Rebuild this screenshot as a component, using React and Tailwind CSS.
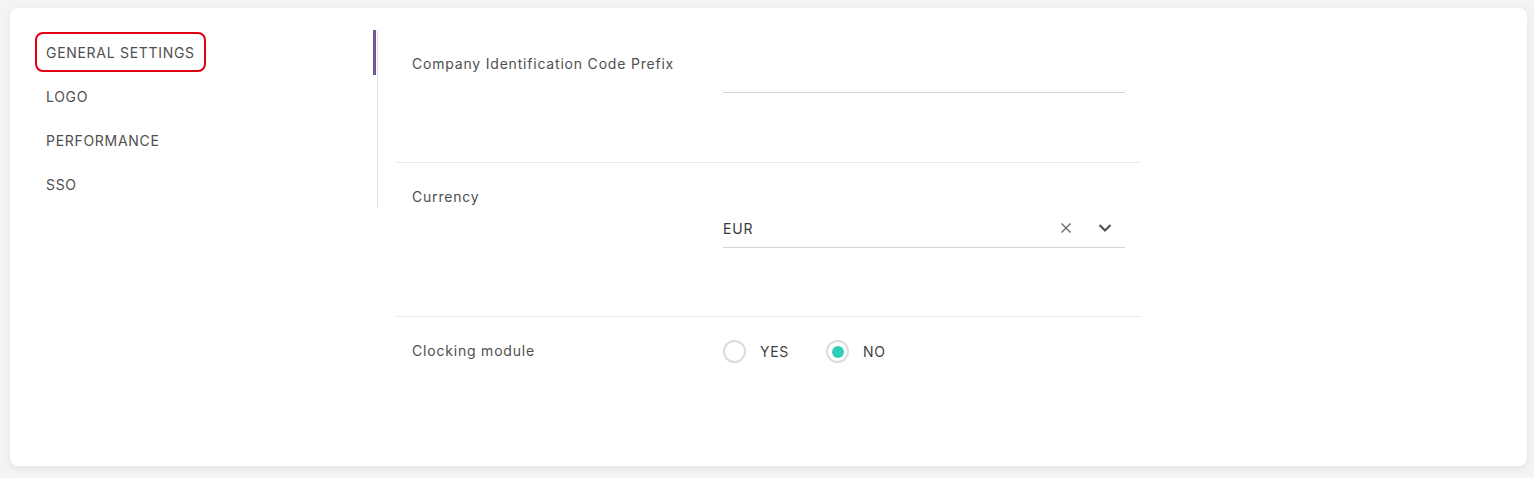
import React from "react";

const font = { fontFamily: "Inter, 'Open Sans', sans-serif" };

function NavItem({ label, active }) {
  return (
    <div
      className={
        "h-[40px] mb-[4px] flex items-center rounded-[8px] text-[14px] tracking-[0.7px] text-[#4f4f4f] w-fit px-[9px] border-2 " +
        (active ? "border-[#e3000f]" : "border-transparent")
      }
    >
      {label}
    </div>
  );
}

function Radio({ checked, label }) {
  return (
    <div className="flex items-center">
      <div className="w-[23px] h-[23px] rounded-full border-2 border-[#dcdcdc] flex items-center justify-center bg-white">
        {checked && <div className="w-[12px] h-[12px] rounded-full bg-[#2fcdb6]" />}
      </div>
      <span className="ml-[14px] text-[14px] tracking-[0.7px] text-[#3f3f3f]">{label}</span>
    </div>
  );
}

export default function App() {
  return (
    <div className="w-[1534px] h-[478px] bg-[#f4f4f4] pt-[8px] pl-[10px]" style={font}>
      <div className="w-[1517px] h-[458px] bg-white rounded-[8px] shadow-[0_2px_8px_rgba(0,0,0,0.08)] flex">
        {/* Nav */}
        <div className="w-[368px] pt-[22px] flex">
          <div className="relative w-[368px] h-[178px] border-r border-[#e0e0e0] pl-[25px] pt-[2px]">
            <div className="absolute right-[1px] top-0 w-[3px] h-[45px] bg-[#7a5394]" />
            <NavItem label="GENERAL SETTINGS" active />
            <NavItem label="LOGO" />
            <NavItem label="PERFORMANCE" />
            <NavItem label="SSO" />
          </div>
        </div>
        {/* Content */}
        <div className="pl-[18px] pt-[22px] text-[14px] text-[#4f4f4f]">
          <div className="w-[745px] h-[133px] border-b border-[#ebebeb] flex px-[16px]">
            <div className="w-[311px] pt-[24px] leading-[20px] tracking-[0.8px]">Company Identification Code Prefix</div>
            <div className="pt-[24px]">
              <div className="w-[402px] h-[39px] border-b border-[#d3d3d3]" />
            </div>
          </div>
          <div className="w-[745px] h-[154px] border-b border-[#ebebeb] flex px-[16px]">
            <div className="w-[311px] pt-[24px] leading-[20px] tracking-[0.8px]">Currency</div>
            <div className="pt-[46px]">
              <div className="w-[402px] h-[39px] border-b border-[#d3d3d3] flex items-center">
                <span className="flex-1 text-[#3a3a3a] tracking-[0.8px]">EUR</span>
                <svg width="12" height="12" viewBox="0 0 12 12" className="mr-[26px]">
                  <path d="M1.5 1.5 L10.5 10.5 M10.5 1.5 L1.5 10.5" stroke="#6b6b6b" strokeWidth="1.4" fill="none" />
                </svg>
                <svg width="14" height="10" viewBox="0 0 14 10" className="mr-[13px]">
                  <path d="M1.5 2 L7 7.5 L12.5 2" stroke="#4d5660" strokeWidth="2.2" fill="none" />
                </svg>
              </div>
            </div>
          </div>
          <div className="w-[745px] flex px-[16px]">
            <div className="w-[311px] pt-[24px] leading-[20px] tracking-[0.8px]">Clocking module</div>
            <div className="pt-[23px] flex items-center gap-[37px]">
              <Radio label="YES" />
              <Radio label="NO" checked />
            </div>
          </div>
        </div>
      </div>
    </div>
  );
}
